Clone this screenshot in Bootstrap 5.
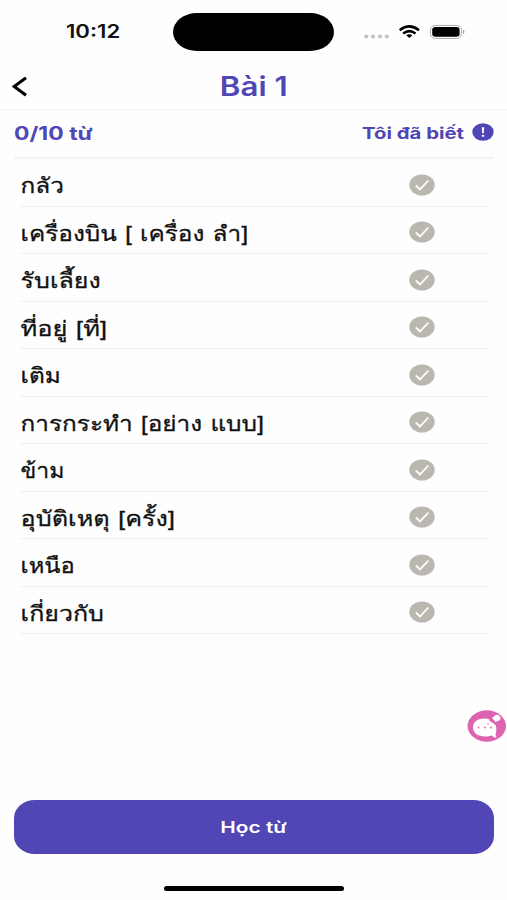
<!DOCTYPE html>
<html lang="vi">
<head>
<meta charset="utf-8">
<meta name="viewport" content="width=device-width, initial-scale=1">
<title>Bài 1</title>
<link href="https://cdn.jsdelivr.net/npm/bootstrap@5.3.0/dist/css/bootstrap.min.css" rel="stylesheet">
<style>
:root{--brand:#5046b5}
body{font-family:Inter,"Noto Sans",sans-serif;color:#111;background:#fefefe}
.screen{width:507px;height:900px;overflow:hidden}
.brand{color:var(--brand)}
.wide{display:inline-block;white-space:nowrap;transform:scaleX(var(--sx,1.2));transform-origin:left center}
.statusbar{height:64px}
.clock{width:107px;margin-left:66px;font-size:18px;font-weight:600;line-height:64px;--sx:1.23}
.island{width:161px;height:38px;border-radius:24px/19px;background:#000}
.signals{margin-left:30px}
.titlebar{height:46px;border-bottom:1px solid #f2f2f2;padding:0 12px}
.titlebar h1{font-size:26.5px;font-weight:600;line-height:45px;transform-origin:center;--sx:1.18}
.sidecell{width:20px}
.summary{height:49px;margin:0 13px 0 14px;border-bottom:2px solid #f3f3f3;font-weight:700}
.count{font-size:18.5px;--sx:1.24}
.known{font-size:16px;width:102px;--sx:1.27;margin-top:-1px}
.words{margin:0 19px 0 20px}
.word{height:47.5px;border-bottom:1.5px solid #f0f0f0;padding:5px 53px 0 0;font-family:Loma,"Noto Sans",sans-serif;font-size:21px;line-height:42px;--sx:1.16}
.word .wide{padding:3px 0 0 .5px;-webkit-text-stroke:.3px #111}
.word:nth-child(4){--sx:1.21}
.word:nth-child(8){--sx:1.2}
.word:nth-child(3),.word:nth-child(10){--sx:1.19}
.word:nth-child(7){--sx:1.1}
.word:nth-child(9){--sx:1.13}
.spacer{height:165.5px;padding-top:75.5px}
.start{margin:0 13px 0 13.5px;height:54px;border-radius:21px/18px;background:var(--brand);color:#fff;font-size:16px;font-weight:600}
.start .wide{transform-origin:center;--sx:1.3}
.home{width:180px;height:5px;border-radius:3px;background:#000;margin:32px auto 0 164px}
</style>
</head>
<body>
<svg class="d-none"><symbol id="tick" viewBox="0 0 26 22"><ellipse cx="13" cy="11" rx="12.7" ry="10.5" fill="#bab7b1"/><path d="M6.8 11.5 11 15.4 19.4 6.5" fill="none" stroke="#fffdf8" stroke-width="1.8"/></symbol></svg>
<main class="screen d-flex flex-column">
<header class="statusbar d-flex align-items-center flex-shrink-0">
<div class="clock"><span class="wide">10:12</span></div>
<div class="island"></div>
<svg class="signals" width="104" height="20" viewBox="364 22 104 20"><g fill="#c5c5c5"><ellipse cx="366.3" cy="36.5" rx="2.2" ry="1.9"/><ellipse cx="373" cy="36.5" rx="2.2" ry="1.9"/><ellipse cx="379.9" cy="36.5" rx="2.2" ry="1.9"/><ellipse cx="386.8" cy="36.5" rx="2.2" ry="1.9"/></g>
<g fill="none" stroke="#000" stroke-width="2.5"><path d="M399.7 30.2Q409.3 22.6 419 30.2"/><path d="M403.2 33.4Q409.3 28.8 415.5 33.4"/></g><path d="M406.2 35.3Q409.3 33.2 412.4 35.3L409.3 38Z"/>
<rect x="430.4" y="25.4" width="31" height="13" rx="5" ry="4" fill="none" stroke="#aaa"/><rect x="432.2" y="27" width="27.4" height="9.8" rx="3.4" ry="2.8"/><path d="M463 29.8Q466 31.9 463 34Z" fill="#999"/></svg>
</header>
<nav class="titlebar d-flex align-items-center justify-content-between flex-shrink-0">
<div class="sidecell d-flex"><svg width="16" height="20" viewBox="0 0 16 20"><path d="M14 .7 2.200 9.500 14 18.300" fill="none" stroke="#000" stroke-width="3"/></svg></div>
<h1 class="wide brand m-0">Bài 1</h1>
<div class="sidecell"></div>
</nav>
<section class="summary brand d-flex align-items-center justify-content-between flex-shrink-0">
<span class="wide count">0/10 từ</span>
<div class="d-flex align-items-center"><div class="known"><span class="wide">Tôi đã biết</span></div>
<svg class="ms-2 mb-1" width="22" height="18" viewBox="0 0 22 18"><ellipse cx="11" cy="9" rx="10.7" ry="8.8" fill="#5046b5"/><path d="M9.8 4.2h2.4l-.4 6h-1.6z" fill="#fff"/><ellipse cx="11" cy="12.8" rx="1.3" ry="1.1" fill="#fff"/></svg></div>
</section>
<section class="words flex-shrink-0" lang="th">
<div class="word d-flex align-items-center justify-content-between"><span class="wide">กลัว</span><svg width="26" height="22"><use href="#tick"/></svg></div>
<div class="word d-flex align-items-center justify-content-between"><span class="wide">เครื่องบิน [ เครื่อง ลำ]</span><svg width="26" height="22"><use href="#tick"/></svg></div>
<div class="word d-flex align-items-center justify-content-between"><span class="wide">รับเลี้ยง</span><svg width="26" height="22"><use href="#tick"/></svg></div>
<div class="word d-flex align-items-center justify-content-between"><span class="wide">ที่อยู่ [ที่]</span><svg width="26" height="22"><use href="#tick"/></svg></div>
<div class="word d-flex align-items-center justify-content-between"><span class="wide">เติม</span><svg width="26" height="22"><use href="#tick"/></svg></div>
<div class="word d-flex align-items-center justify-content-between"><span class="wide">การกระทำ [อย่าง แบบ]</span><svg width="26" height="22"><use href="#tick"/></svg></div>
<div class="word d-flex align-items-center justify-content-between"><span class="wide">ข้าม</span><svg width="26" height="22"><use href="#tick"/></svg></div>
<div class="word d-flex align-items-center justify-content-between"><span class="wide">อุบัติเหตุ [ครั้ง]</span><svg width="26" height="22"><use href="#tick"/></svg></div>
<div class="word d-flex align-items-center justify-content-between"><span class="wide">เหนือ</span><svg width="26" height="22"><use href="#tick"/></svg></div>
<div class="word d-flex align-items-center justify-content-between"><span class="wide">เกี่ยวกับ</span><svg width="26" height="22"><use href="#tick"/></svg></div>
</section>
<div class="spacer d-flex justify-content-end flex-shrink-0">
<svg width="40" height="32" viewBox="0 0 40 32"><ellipse cx="19.8" cy="16" rx="19.2" ry="15.700" fill="#dc64b0"/><path d="M17.500 8.500C9.500 8.500 6 12.500 6 17.500s4.500 9 12 9c2.500 0 4.500-.2 6.500-1q2.500 2.200 5 2.200-1.500-2.200-.6-4.700c1-4 .8-7-1.700-9.800Q23.500 8.500 17.500 8.500Z" fill="#fff"/><path d="M22 10.500 25 7l4.500 4.500-2 2.500Z" fill="#dc64b0"/><path d="M25 8l3.500-3q3-1 4.500 1.500t-1 4L28.500 12Z" fill="#fff"/><g fill="#dc64b0"><circle cx="11.500" cy="17.500" r=".9"/><circle cx="18" cy="17.500" r=".9"/><circle cx="24" cy="17.500" r=".9"/><circle cx="21" cy="14" r=".8"/></g></svg>
</div>
<button class="start btn border-0 p-0 flex-shrink-0"><span class="wide">Học từ</span></button>
<div class="home flex-shrink-0"></div>
</main>
<script src="https://cdn.jsdelivr.net/npm/bootstrap@5.3.0/dist/js/bootstrap.bundle.min.js"></script>
</body>
</html>
